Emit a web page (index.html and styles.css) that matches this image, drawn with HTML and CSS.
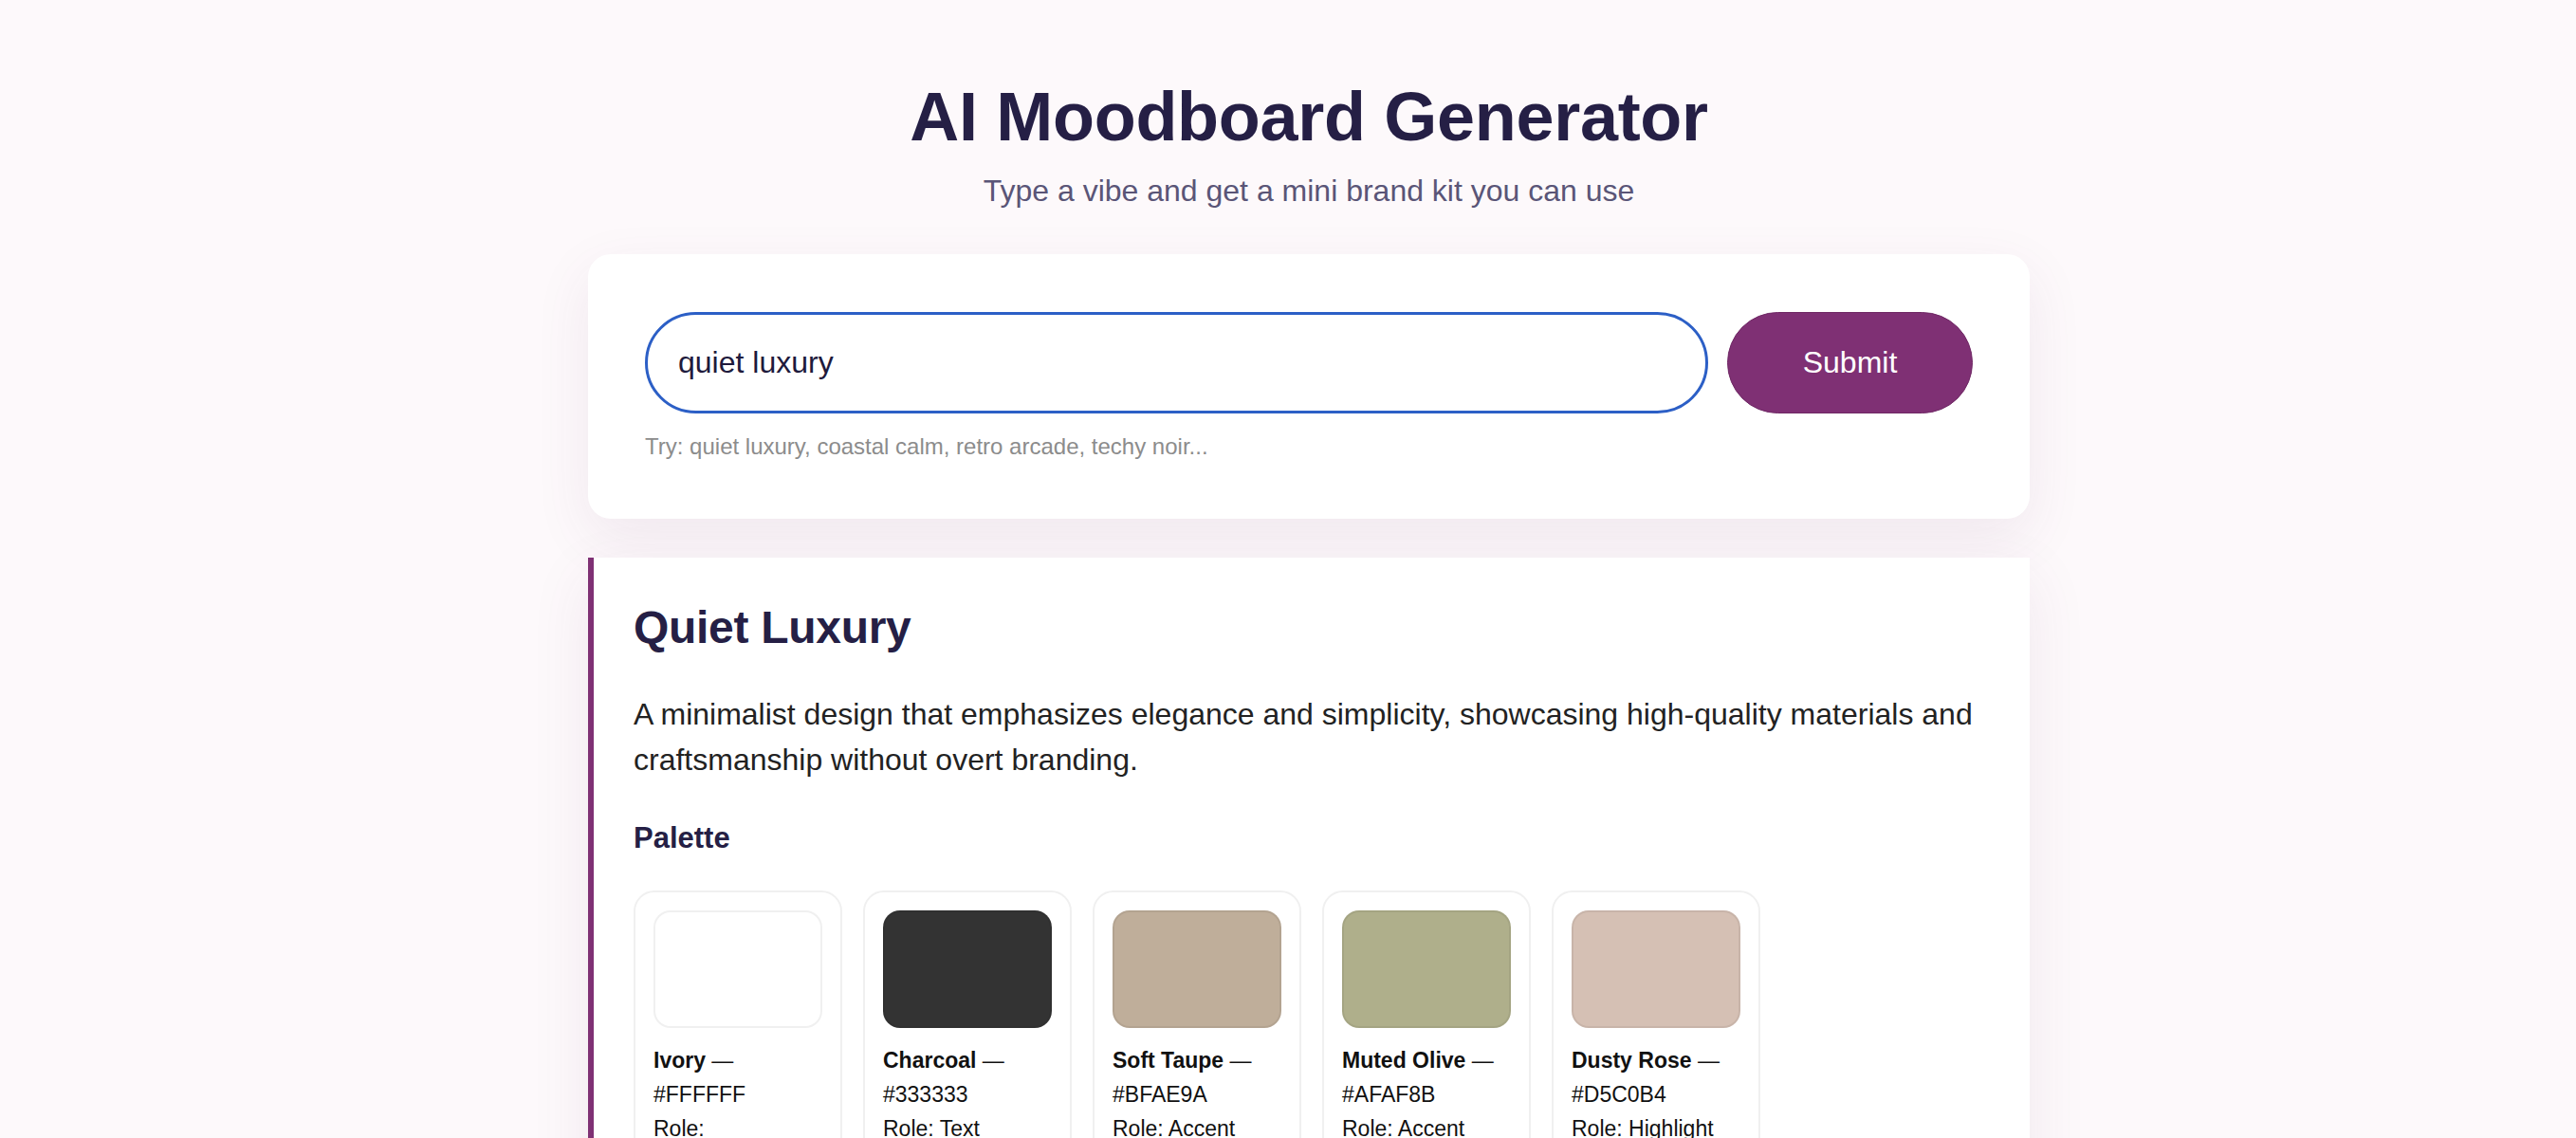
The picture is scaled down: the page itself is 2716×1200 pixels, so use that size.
FILE: index.html
```html
<!DOCTYPE html>
<html lang="en">
<head>
<meta charset="utf-8">
<title>AI Moodboard Generator</title>
<link rel="stylesheet" href="styles.css">
</head>
<body>
<main class="page">
  <header class="hero">
    <h1 class="title">AI Moodboard Generator</h1>
    <p class="subtitle">Type a vibe and get a mini brand kit you can use</p>
  </header>

  <section class="card search-card">
    <form class="search-row" onsubmit="return false;">
      <input class="search-input" type="text" value="quiet luxury" aria-label="Vibe">
      <button class="submit-btn" type="submit">Submit</button>
    </form>
    <p class="hint">Try: quiet luxury, coastal calm, retro arcade, techy noir...</p>
  </section>

  <section class="result">
    <h2 class="result-title">Quiet Luxury</h2>
    <p class="result-desc">A minimalist design that emphasizes elegance and simplicity, showcasing high-quality materials and craftsmanship without overt branding.</p>
    <h3 class="section-title">Palette</h3>
    <div class="palette">
      <div class="swatch-card">
        <div class="swatch" style="background:#FFFFFF"></div>
        <p class="swatch-text"><strong>Ivory</strong> — #FFFFFF<br>Role: Background</p>
      </div>
      <div class="swatch-card">
        <div class="swatch" style="background:#333333"></div>
        <p class="swatch-text"><strong>Charcoal</strong> — #333333<br>Role: Text</p>
      </div>
      <div class="swatch-card">
        <div class="swatch" style="background:#BFAE9A"></div>
        <p class="swatch-text"><strong>Soft Taupe</strong> — #BFAE9A<br>Role: Accent</p>
      </div>
      <div class="swatch-card">
        <div class="swatch" style="background:#AFAF8B"></div>
        <p class="swatch-text"><strong>Muted Olive</strong> — #AFAF8B<br>Role: Accent</p>
      </div>
      <div class="swatch-card">
        <div class="swatch" style="background:#D5C0B4"></div>
        <p class="swatch-text"><strong>Dusty Rose</strong> — #D5C0B4<br>Role: Highlight</p>
      </div>
    </div>
  </section>
</main>
</body>
</html>
```

FILE: styles.css
```css
* {
  box-sizing: border-box;
}

html, body {
  margin: 0;
  padding: 0;
}

body {
  background: #fdf9fb;
  font-family: "Liberation Sans", Arial, Helvetica, sans-serif;
  color: #222222;
  padding-left: 44px;
}

.page {
  max-width: 1520px;
  margin: 0 auto;
  padding-top: 82px;
}

.hero {
  text-align: center;
}

.title {
  margin: 0;
  font-size: 72px;
  font-weight: 700;
  line-height: normal;
  color: #251f45;
  letter-spacing: -0.3px;
}

.subtitle {
  margin: 19px 0 0;
  font-size: 32px;
  line-height: normal;
  color: #5a5577;
}

.card {
  background: #ffffff;
  border-radius: 24px;
  box-shadow: 0 20px 60px rgba(110, 60, 110, 0.09);
}

.search-card {
  margin-top: 48px;
  padding: 61px 60px 62px;
}

.search-row {
  display: flex;
  gap: 20px;
  margin: 0;
}

.search-input {
  flex: 1;
  height: 107px;
  border: 3px solid #2c5fc6;
  border-radius: 54px;
  padding: 0 32px;
  font-family: "Liberation Sans", Arial, Helvetica, sans-serif;
  font-size: 32px;
  color: #1e1a3c;
  background: #ffffff;
  outline: none;
}

.submit-btn {
  flex: 0 0 259px;
  height: 107px;
  border: 1px solid #6f2865;
  border-radius: 54px;
  background: #7f3074;
  color: #ffffff;
  font-family: "Liberation Sans", Arial, Helvetica, sans-serif;
  font-size: 32px;
  cursor: pointer;
}

.hint {
  margin: 21px 0 0;
  font-size: 24px;
  line-height: normal;
  color: #8c8c8c;
}

.result {
  margin-top: 41px;
  background: #ffffff;
  border-left: 6px solid #7f3074;
  padding: 46px 42px 60px;
  box-shadow: 0 20px 60px rgba(110, 60, 110, 0.09);
}

.result-title {
  margin: 0;
  font-size: 48px;
  font-weight: 700;
  line-height: normal;
  color: #251f45;
  letter-spacing: -0.3px;
}

.result-desc {
  margin: 40px 0 0;
  font-size: 32px;
  line-height: 48px;
  color: #222222;
}

.section-title {
  margin: 41px 0 0;
  font-size: 31px;
  font-weight: 700;
  line-height: normal;
  color: #251f45;
}

.palette {
  display: flex;
  flex-wrap: wrap;
  gap: 22px;
  margin-top: 37px;
}

.swatch-card {
  width: 220px;
  border: 2px solid #f0f0f0;
  border-radius: 22px;
  padding: 19px;
  background: #ffffff;
}

.swatch {
  height: 124px;
  border-radius: 18px;
  border: 2px solid rgba(0, 0, 0, 0.06);
}

.swatch-text {
  margin: 16px 0 0;
  font-size: 23px;
  line-height: 36px;
  color: #111111;
}

.swatch-text strong {
  font-weight: 700;
}
```
